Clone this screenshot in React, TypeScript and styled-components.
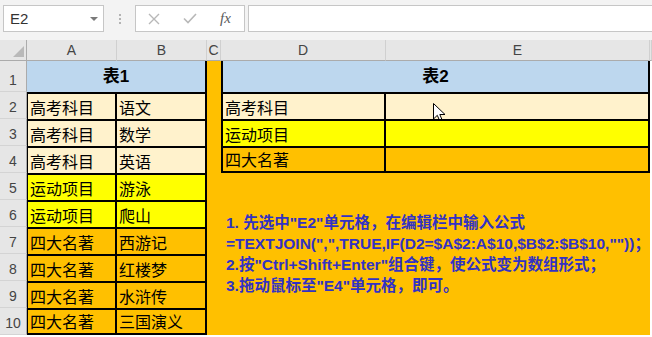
import React from "react";
import styled, { createGlobalStyle } from "styled-components";

const Global = createGlobalStyle`
  html, body { margin: 0; padding: 0; background: #ffffff; }
  body { font-family: "Liberation Sans", "Noto Sans CJK SC", sans-serif; }
  * { box-sizing: border-box; }
`;

const Window = styled.div`
  width: 652px;
  height: 337px;
  overflow: hidden;
  background: #f3f3f3;
  display: flex;
  flex-direction: column;
`;

const FormulaBar = styled.div`
  height: 40px;
  display: flex;
  align-items: flex-start;
  padding: 5px 0 0 3px;
`;

const Box = styled.div`
  height: 27px;
  background: #ffffff;
  border: 1px solid #c6c6c6;
  display: flex;
  align-items: center;
`;

const NameBox = styled(Box)`
  width: 101px;
  padding: 0 5px 0 6px;
  justify-content: space-between;
  font-size: 15px;
  color: #333333;
`;

const DropArrow = styled.span`
  width: 0;
  height: 0;
  border-left: 4px solid transparent;
  border-right: 4px solid transparent;
  border-top: 4px solid #7a7a7a;
`;

const Grip = styled.div`
  width: 31px;
  height: 27px;
  display: flex;
  flex-direction: column;
  align-items: center;
  justify-content: center;
  gap: 2px;
`;

const GripDot = styled.span`
  width: 2px;
  height: 2px;
  background: #b3b3b3;
`;

const FxBox = styled(Box)`
  width: 110px;
`;

const FxButton = styled.span`
  width: 36px;
  height: 25px;
  display: flex;
  align-items: center;
  justify-content: center;
`;

const FxLabel = styled.span`
  font-family: "Liberation Serif", serif;
  font-style: italic;
  font-size: 15px;
  color: #5a5a5a;
  margin-left: 12px;
`;

const FormulaInput = styled(Box)`
  flex: 1;
  margin-left: 3px;
  border-right: none;
`;

const Sheet = styled.div`
  display: grid;
  grid-template-columns: 27px 90px 90px 14px 165px 264px 2px;
  grid-template-rows: 21px 31px repeat(9, 27px) 2px;
  background: #ffffff;
`;

type Place = { $c: number; $r: number; $cs?: number; $rs?: number };

const Placed = styled.div<Place>`
  grid-column: ${(p) => `${p.$c} / span ${p.$cs ?? 1}`};
  grid-row: ${(p) => `${p.$r} / span ${p.$rs ?? 1}`};
  min-width: 0;
`;

const Corner = styled(Placed)`
  background: #e6e6e6;
  border-right: 1px solid #ababab;
  border-bottom: 1px solid #ababab;
  display: flex;
  align-items: flex-end;
  justify-content: flex-end;
  padding: 0 2px 3px 0;
`;

const CornerMark = styled.span`
  width: 0;
  height: 0;
  border-left: 11px solid transparent;
  border-bottom: 11px solid #b9b9b9;
`;

const ColHead = styled(Placed)`
  background: #e6e6e6;
  border-right: 1px solid #d0d0d0;
  border-bottom: 1px solid #ababab;
  display: flex;
  align-items: flex-end;
  justify-content: center;
  padding-bottom: 1px;
  font-size: 14px;
  line-height: 17px;
  color: #444444;
`;

const RowHead = styled(Placed)`
  background: #e6e6e6;
  border-right: 1px solid #ababab;
  border-bottom: 1px solid #d4d4d4;
  display: flex;
  align-items: flex-end;
  justify-content: center;
  padding-bottom: 2px;
  font-size: 14px;
  line-height: 17px;
  color: #444444;
`;

type CellProps = Place & {
  $fill: string;
  $bt?: number;
  $bb?: number;
  $bl?: number;
  $br?: number;
};

const Cell = styled(Placed)<CellProps>`
  position: relative;
  background: ${(p) => p.$fill};
  border-style: solid;
  border-color: #000000;
  border-width: ${(p) => `${p.$bt ?? 0}px ${p.$br ?? 0}px ${p.$bb ?? 0}px ${p.$bl ?? 0}px`};
  display: flex;
  align-items: flex-end;
  padding: 0 0 2px 2px;
  font-family: "Noto Sans CJK SC", sans-serif;
  font-size: 16px;
  line-height: 20px;
  color: #000000;
  white-space: nowrap;
`;

const TitleCell = styled(Cell)`
  align-items: center;
  justify-content: center;
  padding: 0;
  font-family: "Liberation Sans", "Noto Sans CJK SC", sans-serif;
  font-weight: 700;
  font-size: 17px;
`;

const NotePanel = styled(Cell)`
  flex-direction: column;
  align-items: flex-start;
  justify-content: center;
  padding: 0 0 0 19px;
  font-family: "Liberation Sans", "Noto Sans CJK SC", sans-serif;
  font-weight: 700;
  font-size: 15.5px;
  line-height: 21px;
  color: #3232c4;
`;

const Pointer = styled.svg`
  position: absolute;
  left: 47px;
  top: 9px;
`;

const CREAM = "#fff2cc";
const YELLOW = "#ffff00";
const ORANGE = "#ffc000";
const BLUE = "#bdd7ee";

const table1: [string, string, string][] = [
  ["高考科目", "语文", CREAM],
  ["高考科目", "数学", CREAM],
  ["高考科目", "英语", CREAM],
  ["运动项目", "游泳", YELLOW],
  ["运动项目", "爬山", YELLOW],
  ["四大名著", "西游记", ORANGE],
  ["四大名著", "红楼梦", ORANGE],
  ["四大名著", "水浒传", ORANGE],
  ["四大名著", "三国演义", ORANGE],
];

const table2: [string, string][] = [
  ["高考科目", CREAM],
  ["运动项目", YELLOW],
  ["四大名著", ORANGE],
];

const notes = [
  '1. 先选中"E2"单元格，在编辑栏中输入公式',
  '=TEXTJOIN(",",TRUE,IF(D2=$A$2:A$10,$B$2:$B$10,""))；',
  '2.按"Ctrl+Shift+Enter"组合键，使公式变为数组形式；',
  '3.拖动鼠标至"E4"单元格，即可。',
];

const columns = ["A", "B", "C", "D", "E", ""];

export default function App() {
  return (
    <>
      <Global />
      <Window>
        <FormulaBar>
          <NameBox>
            <span>E2</span>
            <DropArrow />
          </NameBox>
          <Grip>
            <GripDot />
            <GripDot />
            <GripDot />
          </Grip>
          <FxBox>
            <FxButton>
              <svg width="12" height="12" viewBox="0 0 12 12">
                <path d="M1 1 L11 11 M11 1 L1 11" stroke="#b8b8b8" strokeWidth="1.4" fill="none" />
              </svg>
            </FxButton>
            <FxButton>
              <svg width="14" height="11" viewBox="0 0 14 11">
                <path d="M1 5.5 L5 9.5 L13 1" stroke="#b8b8b8" strokeWidth="1.6" fill="none" />
              </svg>
            </FxButton>
            <FxLabel>fx</FxLabel>
          </FxBox>
          <FormulaInput />
        </FormulaBar>
        <Sheet>
          <Corner $c={1} $r={1}>
            <CornerMark />
          </Corner>
          {columns.map((c, i) => (
            <ColHead key={i} $c={i + 2} $r={1}>
              {c}
            </ColHead>
          ))}
          {Array.from({ length: 10 }, (_, i) => (
            <RowHead key={i} $c={1} $r={i + 2}>
              {i + 1}
            </RowHead>
          ))}

          <TitleCell $c={2} $r={2} $cs={2} $fill={BLUE} $br={2}>
            表1
          </TitleCell>
          {table1.map(([a, b, fill], i) => {
            const last = i === table1.length - 1;
            return (
              <React.Fragment key={i}>
                <Cell $c={2} $r={i + 3} $fill={fill} $bt={2} $bl={1} $br={2} $bb={last ? 2 : 0}>
                  {a}
                </Cell>
                <Cell $c={3} $r={i + 3} $fill={fill} $bt={2} $br={2} $bb={last ? 2 : 0}>
                  {b}
                </Cell>
              </React.Fragment>
            );
          })}

          <Cell $c={4} $r={2} $rs={4} $fill={ORANGE} />

          <TitleCell $c={5} $r={2} $cs={2} $fill={BLUE} $bl={2} $br={2}>
            表2
          </TitleCell>
          {table2.map(([d, fill], i) => {
            const last = i === table2.length - 1;
            return (
              <React.Fragment key={i}>
                <Cell $c={5} $r={i + 3} $fill={fill} $bt={2} $bl={2} $br={2} $bb={last ? 2 : 0}>
                  {d}
                </Cell>
                <Cell $c={6} $r={i + 3} $fill={fill} $bt={2} $br={2} $bb={last ? 2 : 0}>
                  {i === 0 && (
                    <Pointer width="13" height="20" viewBox="0 0 13 20">
                      <path
                        d="M0.5 0.5 L0.5 16 L4.3 12.3 L7 18.6 L9.4 17.6 L6.8 11.5 L12 11.5 Z"
                        fill="#ffffff"
                        stroke="#000000"
                        strokeWidth="1"
                        strokeLinejoin="miter"
                      />
                    </Pointer>
                  )}
                </Cell>
              </React.Fragment>
            );
          })}

          <NotePanel $c={4} $r={6} $cs={3} $rs={6} $fill={ORANGE}>
            {notes.map((n, i) => (
              <span key={i}>{n}</span>
            ))}
          </NotePanel>
        </Sheet>
      </Window>
    </>
  );
}
